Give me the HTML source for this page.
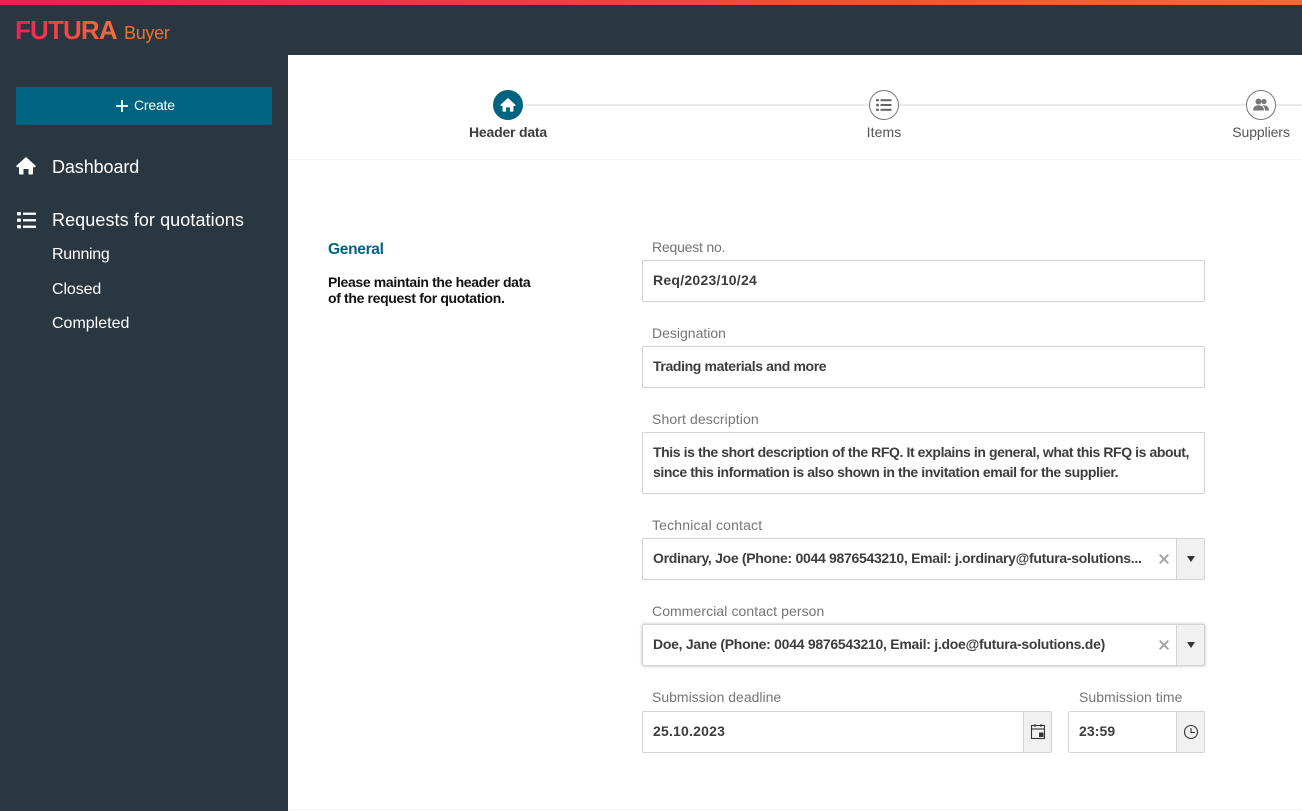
<!DOCTYPE html>
<html><head><meta charset="utf-8">
<style>
html,body{margin:0;padding:0;width:1302px;height:811px;overflow:hidden;background:#fff;font-family:"Liberation Sans",Arial,sans-serif}
.a{position:absolute;white-space:nowrap}
.nav{color:#fff;font-size:18px;line-height:22px;letter-spacing:-.1px}
.sub{color:#fff;font-size:16px;line-height:20px;letter-spacing:-.1px}
.lbl{color:#757575;font-size:14px;line-height:18px;letter-spacing:0}
.box{position:absolute;box-sizing:border-box;background:#fff;border:1px solid #d4d4d4;border-radius:2px}
.val{position:absolute;white-space:nowrap;font-weight:bold;color:#3d3d3d;font-size:14px;line-height:20px;letter-spacing:-.1px}
.btn{position:absolute;box-sizing:border-box;background:#f1f1f1;border:1px solid #d4d4d4;border-radius:0 2px 2px 0}
.step{color:#555;font-size:14px;line-height:18px;text-align:center;width:120px}
</style></head>
<body>
<div class="a" style="left:0;top:0;width:1302px;height:811px;background:#2a3640"></div>
<div class="a" style="left:0;top:0;width:1302px;height:5px;background:linear-gradient(90deg,#f11c50,#f6693a)"></div>
<div class="a" style="left:288px;top:55px;width:1014px;height:756px;background:#fff"></div>

<div class="a" style="left:15px;top:15px;font-size:26px;line-height:30px;font-weight:bold;letter-spacing:-.85px;background:linear-gradient(90deg,#f01f52,#f4713a);-webkit-background-clip:text;background-clip:text;color:transparent">FUTURA</div>
<div class="a" style="left:124px;top:22px;font-size:18px;line-height:22px;color:#f07030;letter-spacing:-.3px">Buyer</div>

<div class="a" style="left:16px;top:87px;width:256px;height:38px;background:#006481;border-radius:1px"></div>
<svg class="a" style="left:116px;top:100px" width="12" height="12" viewBox="0 0 12 12"><path d="M6 0v12M0 6h12" stroke="#fff" stroke-width="1.800"/></svg>
<div class="a" style="left:134px;top:96px;color:#fff;font-size:14px;line-height:18px;letter-spacing:-.2px">Create</div>

<svg class="a" style="left:16px;top:157px" width="20" height="18" viewBox="0 0 20 18"><path d="M10 0 .3 8.800Q0 10 1 10.200H3V16.500Q3 17.500 4 17.500H7.500V12H12.500V17.500H16Q17 17.500 17 16.500V10.200H19Q20 10 19.700 8.800z" fill="#fff"/></svg>
<div class="a nav" style="left:52px;top:156px">Dashboard</div>
<svg class="a" style="left:16px;top:212px" width="21" height="17" viewBox="0 0 21 17"><g fill="#fff"><rect x="1" y="0" width="4" height="3.400" rx=".8"/><rect x="1" y="6.500" width="4" height="3.400" rx=".8"/><rect x="1" y="13" width="4" height="3.400" rx=".8"/><rect x="7" y=".6" width="13" height="2.300"/><rect x="7" y="7.100" width="13" height="2.300"/><rect x="7" y="13.600" width="13" height="2.300"/></g></svg>
<div class="a nav" style="left:52px;top:209px;letter-spacing:.08px">Requests for quotations</div>
<div class="a sub" style="left:52px;top:245px;letter-spacing:-.3px">Running</div>
<div class="a sub" style="left:52px;top:280px">Closed</div>
<div class="a sub" style="left:52px;top:314px;letter-spacing:0">Completed</div>

<!-- stepper -->
<div class="a" style="left:508px;top:104px;width:794px;height:2px;background:#ebebeb"></div>
<div class="a" style="left:288px;top:159px;width:1014px;height:1px;background:#f5f5f5"></div>
<div class="a" style="left:493px;top:90px;width:30px;height:30px;border-radius:50%;background:#006481"></div>
<svg class="a" style="left:500px;top:98px" width="16" height="14" viewBox="0 0 20 18"><path d="M10 0 .3 8.800Q0 10 1 10.200H3V16.500Q3 17.500 4 17.500H7.500V12H12.500V17.500H16Q17 17.500 17 16.500V10.200H19Q20 10 19.700 8.800z" fill="#fff"/></svg>
<div class="a step" style="left:448px;top:123px;font-weight:bold;color:#3d3d3d;letter-spacing:-.2px">Header data</div>
<div class="a" style="left:869px;top:90px;width:30px;height:30px;box-sizing:border-box;border:1px solid #777;border-radius:50%;background:#fff"></div>
<svg class="a" style="left:876px;top:98px" width="16" height="14" viewBox="0 0 16 14"><g fill="#666"><rect x="0" y="1" width="3" height="2.400" rx="1"/><rect x="0" y="5.800" width="3" height="2.400" rx="1"/><rect x="0" y="10.600" width="3" height="2.400" rx="1"/><rect x="4.500" y="1.200" width="11" height="2"/><rect x="4.500" y="6" width="11" height="2"/><rect x="4.500" y="10.800" width="11" height="2"/></g></svg>
<div class="a step" style="left:824px;top:123px;letter-spacing:.1px">Items</div>
<div class="a" style="left:1246px;top:90px;width:30px;height:30px;box-sizing:border-box;border:1px solid #777;border-radius:50%;background:#fff"></div>
<svg class="a" style="left:1253px;top:98px" width="16" height="14" viewBox="0 0 16 14"><g fill="#777"><circle cx="5.500" cy="3.500" r="3"/><circle cx="11" cy="3.500" r="2.600"/><path d="M0 12.500C0 9 2.500 7.300 5.500 7.300S11 9 11 12.500z"/><path d="M9.500 7.300c3.500-.6 6.500 1.300 6.500 5.200h-4C12 10.500 11 8.500 9.500 7.300z"/></g></svg>
<div class="a step" style="left:1201px;top:123px;letter-spacing:-.1px">Suppliers</div>

<!-- left text -->
<div class="a" style="left:328px;top:240px;font-size:15.500px;line-height:20px;font-weight:bold;color:#006481;letter-spacing:-.3px">General</div>
<div class="a" style="left:328px;top:274px;font-size:14px;line-height:16px;font-weight:bold;color:#111;letter-spacing:-.35px">Please maintain the header data<br>of the request for quotation.</div>

<!-- form -->
<div class="a lbl" style="left:652px;top:238px;letter-spacing:-.2px">Request no.</div>
<div class="box" style="left:642px;top:260px;width:563px;height:42px"></div>
<div class="val" style="left:653px;top:270px;letter-spacing:.26px">Req/2023/10/24</div>

<div class="a lbl" style="left:652px;top:324px">Designation</div>
<div class="box" style="left:642px;top:346px;width:563px;height:42px"></div>
<div class="val" style="left:653px;top:356px;letter-spacing:-.37px">Trading materials and more</div>

<div class="a lbl" style="left:652px;top:410px;letter-spacing:.1px">Short description</div>
<div class="box" style="left:642px;top:432px;width:563px;height:62px"></div>
<div class="val" style="left:653px;top:442px;letter-spacing:-.41px">This is the short description of the RFQ. It explains in general, what this RFQ is about,<br>since this information is also shown in the invitation email for the supplier.</div>

<div class="a lbl" style="left:652px;top:516px;letter-spacing:.17px">Technical contact</div>
<div class="box" style="left:642px;top:538px;width:563px;height:42px"></div>
<div class="btn" style="left:1176px;top:538px;width:29px;height:42px"></div>
<div class="val" style="left:653px;top:548px;letter-spacing:-.3px">Ordinary, Joe (Phone: 0044 9876543210, Email: j.ordinary@futura-solutions...</div>
<svg class="a" style="left:1159px;top:554px" width="10" height="10" viewBox="0 0 10 10"><path d="M.7.700l8.600 8.600M9.300.700.7 9.300" stroke="#a5a5a5" stroke-width="2"/></svg>
<svg class="a" style="left:1187px;top:556px" width="8" height="6" viewBox="0 0 8 6"><path d="M0 0h8L4 6z" fill="#333"/></svg>

<div class="a lbl" style="left:652px;top:602px;letter-spacing:.08px">Commercial contact person</div>
<div class="box" style="left:642px;top:624px;width:563px;height:42px;box-shadow:0 0 3px #bbb"></div>
<div class="btn" style="left:1176px;top:624px;width:29px;height:42px"></div>
<div class="val" style="left:653px;top:634px;letter-spacing:-.27px">Doe, Jane (Phone: 0044 9876543210, Email: j.doe@futura-solutions.de)</div>
<svg class="a" style="left:1159px;top:640px" width="10" height="10" viewBox="0 0 10 10"><path d="M.7.700l8.600 8.600M9.300.700.7 9.300" stroke="#a5a5a5" stroke-width="2"/></svg>
<svg class="a" style="left:1187px;top:642px" width="8" height="6" viewBox="0 0 8 6"><path d="M0 0h8L4 6z" fill="#333"/></svg>

<div class="a lbl" style="left:652px;top:688px">Submission deadline</div>
<div class="box" style="left:642px;top:711px;width:410px;height:42px"></div>
<div class="btn" style="left:1023px;top:711px;width:29px;height:42px"></div>
<div class="val" style="left:653px;top:721px;letter-spacing:.2px">25.10.2023</div>
<svg class="a" style="left:1030px;top:723px" width="16" height="17" viewBox="0 0 16 17"><g fill="none" stroke="#333" stroke-width="1.100"><rect x="1.500" y="2.500" width="13" height="13"/><path d="M1.500 6h13"/></g><path d="M4.500 1h1v3h-1zM10.500 1h1v3h-1z" fill="#333"/><rect x="9" y="9.500" width="4.500" height="4.500" fill="#333"/></svg>

<div class="a lbl" style="left:1079px;top:688px;letter-spacing:.05px">Submission time</div>
<div class="box" style="left:1068px;top:711px;width:137px;height:42px"></div>
<div class="btn" style="left:1176px;top:711px;width:29px;height:42px"></div>
<div class="val" style="left:1079px;top:721px;letter-spacing:.1px">23:59</div>
<svg class="a" style="left:1183px;top:724px" width="16" height="16" viewBox="0 0 16 16"><circle cx="8" cy="8" r="6.500" fill="none" stroke="#333" stroke-width="1.100"/><path d="M8 4v4.500h4" fill="none" stroke="#333" stroke-width="1.100"/></svg>
<div class="a" style="left:288px;top:809px;width:1014px;height:1px;background:#f5f5f5"></div>
</body></html>
